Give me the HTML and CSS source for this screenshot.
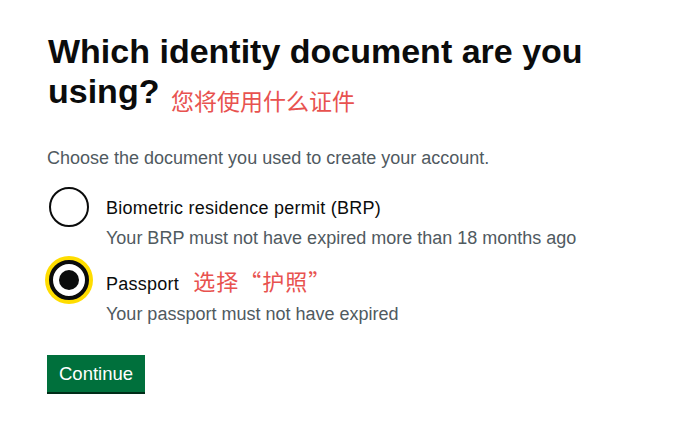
FILE: index.html
```html
<!DOCTYPE html>
<html lang="en">
<head>
<meta charset="utf-8">
<title>Which identity document are you using?</title>
<link rel="stylesheet" href="styles.css">
</head>
<body>
<main class="page">
  <form class="form">
    <fieldset class="fieldset">
      <legend class="legend">
        <h1 class="heading">Which identity document are you using? <span class="note note-heading" lang="zh">您将使用什么证件</span></h1>
      </legend>
      <p class="hint">Choose the document you used to create your account.</p>
      <div class="radios">
        <div class="radio-item">
          <span class="radio"></span>
          <div class="radio-text">
            <div class="label">Biometric residence permit (BRP)</div>
            <div class="item-hint">Your BRP must not have expired more than 18 months ago</div>
          </div>
        </div>
        <div class="radio-item">
          <span class="radio radio-checked"></span>
          <div class="radio-text">
            <div class="label">Passport <span class="note note-label" lang="zh">选择“护照”</span></div>
            <div class="item-hint">Your passport must not have expired</div>
          </div>
        </div>
      </div>
    </fieldset>
    <button type="button" class="button">Continue</button>
  </form>
</main>
</body>
</html>
```
FILE: styles.css
```css
* { box-sizing: border-box; }
html, body { margin: 0; padding: 0; background: #ffffff; }
body {
  font-family: "Liberation Sans", Arial, sans-serif;
  color: #0b0c0c;
  width: 689px;
  height: 440px;
  overflow: hidden;
}
.page {
  padding: 31px 0 0 48px;
}
.form { margin: 0; }
.fieldset {
  margin: 0;
  padding: 0;
  border: 0;
  min-width: 0;
}
.legend { padding: 0; }
.heading {
  margin: 0;
  font-size: 34px;
  line-height: 40px;
  font-weight: 700;
  letter-spacing: 0;
  width: 590px;
}
.note {
  font-family: "Noto Sans CJK SC", sans-serif;
  font-weight: 400;
  color: #e8524f;
  letter-spacing: 0;
  line-height: 1;
}
.note-heading {
  font-size: 23px;
  margin-left: 2px;
  vertical-align: -7px;
}
.note-label {
  font-size: 22px;
  letter-spacing: 1px;
  margin-left: 9px;
}
.hint {
  margin: 34px 0 0 -1px;
  font-size: 18px;
  line-height: 24px;
  color: #505a5f;
}
.radios {
  margin-top: 17px;
  display: flex;
  flex-direction: column;
  gap: 10px;
}
.radio-item {
  display: flex;
  align-items: flex-start;
  gap: 17px;
}
.radio {
  flex: none;
  width: 40px;
  height: 40px;
  margin-left: 1px;
  border: 2px solid #0b0c0c;
  border-radius: 50%;
  background: #fff;
  position: relative;
}
.radio-checked {
  border-width: 4px;
  box-shadow: 0 0 0 4px #ffdd00;
}
.radio-checked::after {
  content: "";
  position: absolute;
  left: 6px;
  top: 6px;
  width: 20px;
  height: 20px;
  border-radius: 50%;
  background: #0b0c0c;
}
.radio-text {
  padding-top: 9px;
}
.label {
  font-size: 18px;
  line-height: 24px;
  letter-spacing: 0.25px;
  color: #0b0c0c;
}
.item-hint {
  margin-top: 6px;
  font-size: 18px;
  line-height: 24px;
  color: #505a5f;
}
.button {
  margin-top: 29px;
  margin-left: -1px;
  display: inline-block;
  border: 0;
  padding: 8px 12px 7px;
  font-family: "Liberation Sans", Arial, sans-serif;
  font-size: 18.5px;
  line-height: 22px;
  color: #ffffff;
  background: #00703c;
  box-shadow: 0 2px 0 #002d18;
  border-radius: 0;
}
```
